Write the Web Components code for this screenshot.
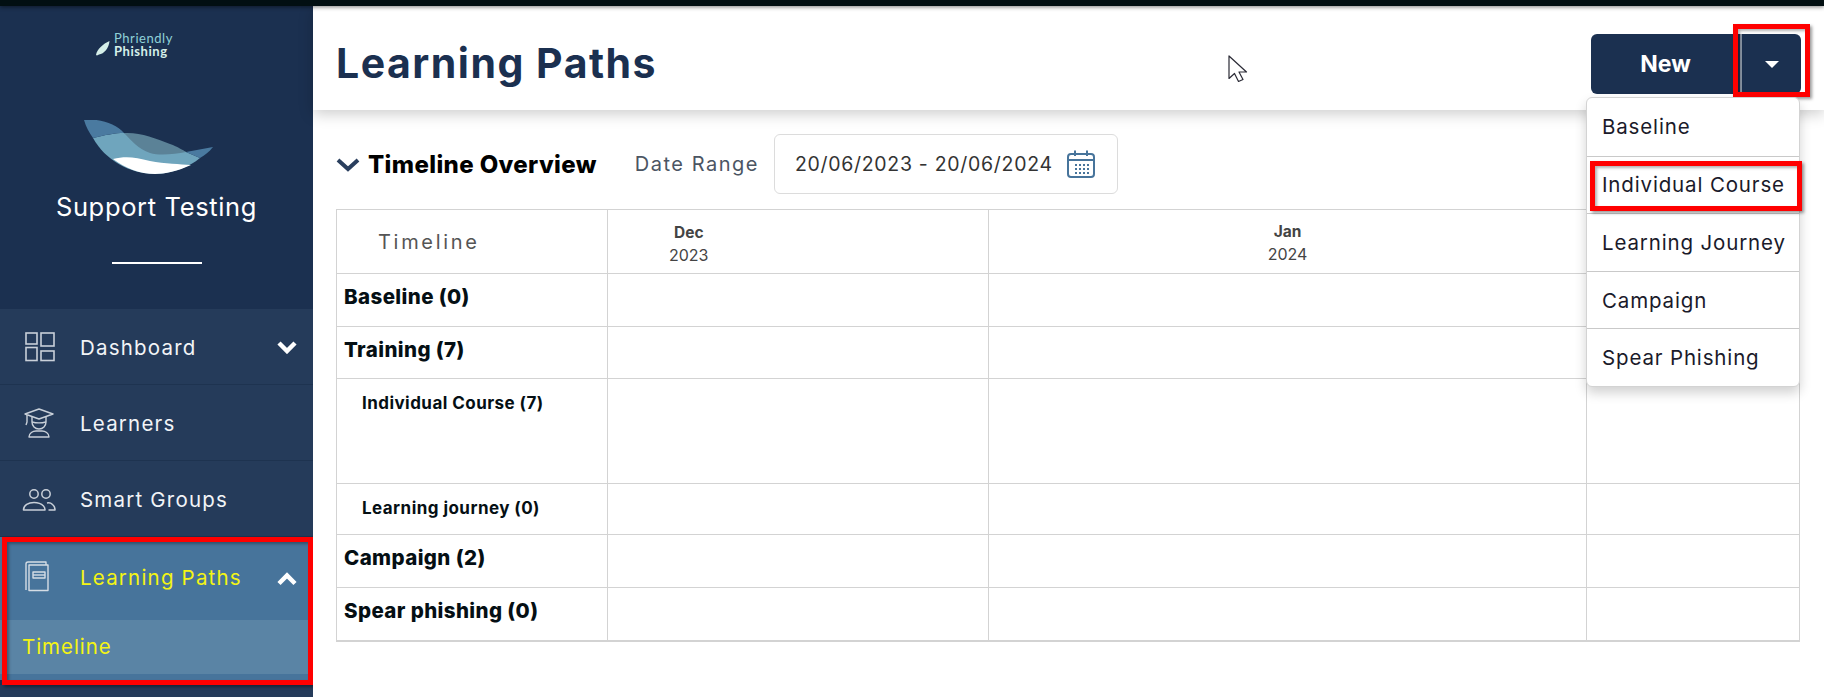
<!DOCTYPE html>
<html lang="en">
<head>
<meta charset="utf-8">
<title>Learning Paths</title>
<style>
  html, body { margin: 0; height: 100%; overflow: hidden; background: #fff; }
  body { font-family: Inter, "Liberation Sans", sans-serif; }
</style>
</head>
<body>
<pp-app>
  <pp-sidebar slot="side">
    <pp-nav-item icon="dashboard" chevron="down">Dashboard</pp-nav-item>
    <pp-nav-item icon="learners">Learners</pp-nav-item>
    <pp-nav-item icon="groups">Smart Groups</pp-nav-item>
    <pp-nav-item icon="book" chevron="up" active>Learning Paths</pp-nav-item>
    <pp-sub-item>Timeline</pp-sub-item>
  </pp-sidebar>
  <pp-header slot="head" heading="Learning Paths"></pp-header>
  <pp-overview slot="body"></pp-overview>
</pp-app>

<script>
// Icons used by the side menu
const ICONS = {
  dashboard: `<g fill="none" stroke="#c9d0d9" stroke-width="1.6">
      <rect x="4" y="2" width="11" height="11"/><rect x="19" y="2" width="13" height="13"/>
      <rect x="4" y="16.500" width="11" height="13"/><rect x="19" y="20" width="13" height="9.500"/></g>`,
  learners: `<g fill="none" stroke="#c9d0d9" stroke-width="1.4" stroke-linejoin="round">
      <path d="M3 7 17 2l14 5-14 5z"/><path d="M5 8v7l-1 3M10 10v5c0 4 3 7 7 7s7-3 7-7v-5"/>
      <path d="M7 30c0-4 4-6 7-6h6c3 0 7 2 7 6z"/><path d="M10 15c4 1 10 1 14 0"/></g>`,
  groups: `<g fill="none" stroke="#c9d0d9" stroke-width="1.500" stroke-linejoin="round">
      <circle cx="12" cy="11" r="4.200"/><circle cx="24" cy="11" r="4.200"/>
      <path d="M1.500 27c0-5 5-7.500 10.500-7.500 4 0 7 1 9.500 3.500 1 1 1.500 2.500 1.500 4z"/>
      <path d="M25 20c2-.5 4 0 5.500 1.500 2 1.500 2.500 3.500 2.500 5.500H26.500"/></g>`,
  book: `<g fill="none" stroke="#d5dde5" stroke-width="1.400" stroke-linejoin="round">
      <path d="M4 30V4c0-1 1-2 2-2h18v3"/><rect x="7" y="5" width="19" height="25.500"/>
      <rect x="11" y="12" width="12" height="6"/><path d="M11 15h12"/></g>`
};

const chevron = (dir, color, w) => `<svg width="22" height="14" viewBox="0 0 22 14">
  <path d="${dir === 'up' ? 'M3 11.500 11 3.500 19 11.500' : 'M3 3 11 11 19 3'}" fill="none" stroke="${color}" stroke-width="${w}"/></svg>`;

// Red marker drawn over the screenshot
class PpMark extends HTMLElement {
  constructor() {
    super();
    this.attachShadow({mode: 'open'}).innerHTML = `
      <style>
        :host { display: block; position: absolute; box-sizing: border-box; border: 5px solid #f00;
                box-shadow: 2px 2px 3px rgba(0,0,0,.4), inset 2px 2px 3px rgba(0,0,0,.3); pointer-events: none; }
      </style>`;
  }
}

class PpApp extends HTMLElement {
  constructor() {
    super();
    this.attachShadow({mode: 'open'}).innerHTML = `
      <style>
        :host { display: flex; flex-direction: column; width: 1824px; height: 697px; overflow: hidden; position: relative; }
        .top { height: 6px; flex: none; background: #020f12; box-shadow: 0 1px 4px rgba(0,0,0,.5); position: relative; z-index: 3; }
        .row { flex: 1; display: flex; min-height: 0; }
        .side { flex: none; width: 313px; }
        .main { flex: 1; display: flex; flex-direction: column; min-width: 0; position: relative; }
        .cursor { position: absolute; left: 1228px; top: 55px; z-index: 5; }
      </style>
      <div class="top"></div>
      <div class="row">
        <div class="side"><slot name="side"></slot></div>
        <div class="main"><slot name="head"></slot><slot name="body"></slot></div>
      </div>
      <svg class="cursor" width="20" height="28" viewBox="0 0 20 28">
        <path d="M1 1V23.500L6.500 18.500 10.500 26.500 15 24.500 11 17H18.500Z" fill="#fff" stroke="#2a2a35" stroke-width="1.200" stroke-linejoin="round"/>
      </svg>`;
  }
}

class PpSidebar extends HTMLElement {
  constructor() {
    super();
    this.attachShadow({mode: 'open'}).innerHTML = `
      <style>
        :host { display: flex; flex-direction: column; height: 691px; background: #253b5a; position: relative; overflow: hidden; }
        .brand { flex: none; height: 303px; background: #1b3050; display: flex; flex-direction: column; align-items: center; color: #fff; box-sizing: border-box; }
        .logo { display: flex; align-items: center; gap: 4px; margin: 26px 0 0 96px; align-self: flex-start; height: 26px; }
        .logo svg { margin-top: 6px; }
        .logo .t { font: 700 13px/13px Lato, sans-serif; letter-spacing: .55px; }
        .logo .a { color: #8fd0d8; font-weight: 400; display: block; }
        .logo .b { color: #d5efe9; display: block; }
        .whale { margin: 62px 0 0 84px; display: block; align-self: flex-start; }
        .name { font-size: 25.500px; line-height: 30px; margin-top: 16px; letter-spacing: .65px; }
        .rule { width: 90px; height: 2px; background: #fff; margin-top: 40px; }
        pp-mark { left: 2px; top: 531px; width: 311px; height: 148px; }
        .foot { flex: none; height: 6px; background: #47749b; border-bottom: 5px solid #1b3050; }
      </style>
      <div class="brand">
        <div class="logo">
          <svg width="14" height="16" viewBox="0 0 14 16"><path d="M0 15C1 9 7 4 13.500 1 13 8 8 14 3 14.500L1 15.500Z" fill="#d5efe9"/></svg>
          <div class="t"><span class="a">Phriendly</span><span class="b">Phishing</span></div>
        </div>
        <svg class="whale" width="130" height="56" viewBox="84 120 130 56">
          <path d="M93 138C105 135 115 133 124 133L186 152 200 158C190 167 170 174 155 174 130 174 105 160 93 138Z" fill="#6fa5bd"/>
          <path d="M84 120C100 118 116 124 124 133 115 133 105 135 93 138 89 132 86 127 84 120Z" fill="#4a7aa0"/>
          <path d="M124 133C140 132 155 138 170 144 178 147 183 150 186 152 175 154 160 156 150 153 138 149 132 141 124 133Z" fill="#5b8297"/>
          <path d="M186 152 213 147C209 152 205 155 200 158Z" fill="#4a7aa0"/>
          <path d="M113 159C125 156 135 157 150 161 165 164 180 164 191 165 178 171 165 174 155 174 140 174 125 168 113 159Z" fill="#fff"/>
        </svg>
        <div class="name">Support Testing</div>
        <div class="rule"></div>
      </div>
      <slot></slot>
      <div class="foot"></div>
      <pp-mark></pp-mark>`;
  }
}

class PpNavItem extends HTMLElement {
  connectedCallback() {
    if (this.shadowRoot) return;
    const icon = ICONS[this.getAttribute('icon')] || '';
    const chev = this.getAttribute('chevron');
    this.attachShadow({mode: 'open'}).innerHTML = `
      <style>
        :host { display: flex; align-items: center; height: 76px; box-sizing: border-box; padding: 1px 15px 0 22px;
                color: #f2f4f7; font-size: 20.500px; letter-spacing: 1.200px; border-bottom: 1px solid #1e3350; position: relative; }
        :host([active]) { background: #47749b; color: #f4f414; height: 83px; border-bottom: 0; padding-top: 0; }
        .ic { width: 34px; height: 32px; flex: none; margin-right: 24px; }
        .lb { flex: 1; }
        :host([active]) .ic { margin-top: -6px; }
        :host([active]) .lb { margin-top: -3px; }
      </style>
      <svg class="ic" viewBox="0 0 34 32">${icon}</svg>
      <span class="lb"><slot></slot></span>
      ${chev ? chevron(chev, '#fff', 4.500) : ''}`;
  }
}

class PpSubItem extends HTMLElement {
  constructor() {
    super();
    this.attachShadow({mode: 'open'}).innerHTML = `
      <style>
        :host { display: flex; align-items: center; height: 54px; box-sizing: border-box; padding: 0 0 2px 22px; background: #5a84a5; color: #f4f414;
                font-size: 20.500px; letter-spacing: .95px; }
      </style><slot></slot>`;
  }
}

class PpHeader extends HTMLElement {
  connectedCallback() {
    if (this.shadowRoot) return;
    this.attachShadow({mode: 'open'}).innerHTML = `
      <style>
        :host { display: flex; align-items: flex-start; justify-content: space-between; flex: none; height: 104px; box-sizing: border-box;
                padding: 28px 23px 0 23px; background: #fff; box-shadow: 0 4px 14px rgba(0,0,0,.2); position: relative; z-index: 2; }
        h1 { margin: 4px 0 0; font: 700 41px/50px Inter, sans-serif; letter-spacing: 1.500px; color: #1b3050; }
        .btn { display: flex; height: 60px; width: 210px; border-radius: 6px; background: #1b3050; color: #fff; position: relative; }
        .new { flex: 1; display: flex; align-items: center; justify-content: center; font-weight: 700; font-size: 23px; border-right: 2px solid #8a95a5; }
        .car { width: 59px; display: flex; align-items: center; justify-content: center; }
        .car i { width: 0; height: 0; border: 7.500px solid transparent; border-top-color: #fff; border-bottom: 0; display: block; }
        pp-mark { left: 142px; top: -10px; width: 77px; height: 73px; }
        pp-menu { position: absolute; left: -5px; top: 63px; }
      </style>
      <h1>${this.getAttribute('heading')}</h1>
      <div class="btn">
        <div class="new">New</div>
        <div class="car"><i></i></div>
        <pp-mark></pp-mark>
        <pp-menu></pp-menu>
      </div>`;
  }
}

class PpMenu extends HTMLElement {
  constructor() {
    super();
    const items = ['Baseline', 'Individual Course', 'Learning Journey', 'Campaign', 'Spear Phishing'];
    this.attachShadow({mode: 'open'}).innerHTML = `
      <style>
        :host { display: block; width: 214px; background: #fff; border: 1px solid #d3d3d3; border-radius: 6px; box-sizing: border-box;
                box-shadow: 0 6px 12px rgba(0,0,0,.18); z-index: 4; color: #1a1a2a; }
        div.it { height: 57.600px; display: flex; align-items: center; padding-left: 15px; font-size: 20.500px; letter-spacing: .85px; border-top: 1px solid #c9c9c9; box-sizing: border-box; }
        div.it:first-of-type { border-top: 0; }
        pp-mark { left: 3px; top: 63px; width: 212px; height: 50px; }
      </style>
      ${items.map(t => `<div class="it">${t}</div>`).join('')}
      <pp-mark></pp-mark>`;
  }
}

class PpOverview extends HTMLElement {
  constructor() {
    super();
    const rows = [
      ['Baseline (0)', 0, 53], ['Training (7)', 0, 52], ['Individual Course (7)', 1, 105],
      ['Learning journey (0)', 1, 51], ['Campaign (2)', 0, 53], ['Spear phishing (0)', 0, 53]
    ];
    const cells = rows.map(([t, sub, h]) => `
      <div class="c lab ${sub ? 'sub' : ''}" style="height:${h}px">${t}</div>
      <div class="c"></div><div class="c"></div><div class="c"></div>`).join('');
    let dots = '';
    for (const y of [15, 19, 23]) for (const x of [9, 13, 17, 21]) dots += `<rect x="${x}" y="${y}" width="2" height="2"/>`;
    this.attachShadow({mode: 'open'}).innerHTML = `
      <style>
        :host { display: block; padding: 24px 25px 0 23px; }
        .bar { display: flex; align-items: center; height: 60px; margin-bottom: 15px; }
        .bar svg.ch { margin-right: 8px; margin-top: 2px; }
        .bar h2 { margin: 0 38px 0 0; font-size: 24px; font-weight: 800; color: #000; letter-spacing: .38px; }
        .dr { font-size: 20px; color: #4b5563; letter-spacing: 1.500px; margin-right: 15px; }
        .box { display: flex; align-items: center; justify-content: space-between; width: 344px; height: 60px; box-sizing: border-box;
               padding: 0 21px 0 20px; border: 1px solid #dcdcdc; border-radius: 6px; font-size: 19.500px; color: #333; letter-spacing: .7px; }
        .tb { display: grid; grid-template-columns: 271px 381px 598px 213px; border: 1px solid #d3d3d3; border-bottom-width: 2px; box-sizing: border-box; width: 1464px; }
        .c { border-right: 1px solid #d3d3d3; border-top: 1px solid #d3d3d3; box-sizing: border-box; }
        .c:nth-child(4n) { border-right: 0; }
        .hd { height: 63px; border-top: 0; padding-top: 3px; display: flex; flex-direction: column; justify-content: center; align-items: center; font-size: 16px; color: #444; line-height: 22px; }
        .hd b { font-size: 15.500px; }
        .hd.dec { align-items: flex-start; padding-left: 61px; }
        .hd.first { font-size: 20px; letter-spacing: 2.700px; color: #555; align-items: flex-start; padding: 0 0 0 41px; }
        .lab { font-weight: 800; font-size: 20.500px; color: #050f14; padding: 11px 0 0 7px; line-height: 24px; letter-spacing: .4px; }
        .lab.sub { font-size: 17px; font-weight: 700; padding: 12px 0 0 25px; letter-spacing: .45px; }
      </style>
      <div class="bar">
        <svg class="ch" width="24" height="16" viewBox="0 0 24 16"><path d="M2 3 12 12 22 3" fill="none" stroke="#2a3f5e" stroke-width="4"/></svg>
        <h2>Timeline Overview</h2>
        <span class="dr">Date Range</span>
        <div class="box"><span>20/06/2023 - 20/06/2024</span>
          <svg width="30" height="30" viewBox="0 0 30 30">
            <rect x="2" y="5" width="26" height="23" rx="3" fill="none" stroke="#47749b" stroke-width="2"/>
            <path d="M2 11H28M9 1.500V7M21 1.500V7" stroke="#47749b" stroke-width="2" fill="none"/>
            <g fill="#47749b">${dots}</g>
          </svg>
        </div>
      </div>
      <div class="tb">
        <div class="c hd first">Timeline</div>
        <div class="c hd dec"><div style="text-align:center"><b>Dec</b><br>2023</div></div>
        <div class="c hd"><b>Jan</b>2024</div>
        <div class="c hd"></div>
        ${cells}
      </div>`;
  }
}

customElements.define('pp-mark', PpMark);
customElements.define('pp-app', PpApp);
customElements.define('pp-sidebar', PpSidebar);
customElements.define('pp-nav-item', PpNavItem);
customElements.define('pp-sub-item', PpSubItem);
customElements.define('pp-header', PpHeader);
customElements.define('pp-menu', PpMenu);
customElements.define('pp-overview', PpOverview);
</script>
</body>
</html>
